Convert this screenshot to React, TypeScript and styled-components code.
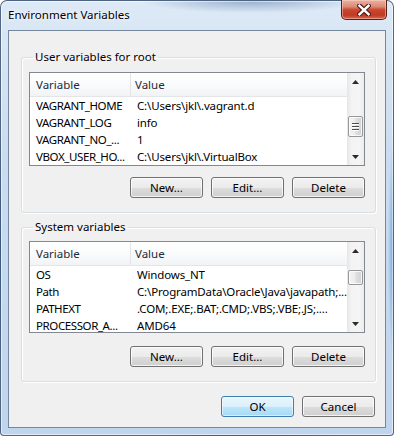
import React from 'react';
import styled, { createGlobalStyle } from 'styled-components';

const Global = createGlobalStyle`
  html, body { margin: 0; padding: 0; background: #ffffff; }
  body {
    font-family: "Noto Sans", "Liberation Sans", sans-serif;
    font-size: 11.5px;
    color: #000;
  }
  * { box-sizing: border-box; }
`;

const Window = styled.div`
  width: 394px;
  height: 436px;
  display: flex;
  flex-direction: column;
  padding: 0 7px 7px 7px;
  border: 1px solid rgba(40, 62, 92, 0.75);
  border-radius: 7px 7px 4px 4px;
  background:
    radial-gradient(ellipse 110px 12px at 250px 0px, rgba(95, 128, 170, 0.55), rgba(95, 128, 170, 0) 100%),
    radial-gradient(ellipse 6px 120px at 393px 250px, rgba(70, 140, 210, 0.8), rgba(70, 140, 210, 0) 100%),
    linear-gradient(to bottom, #dde9f6 0%, #cadcf0 35%, #bfd5ed 100%);
  box-shadow: inset 0 0 0 1px rgba(255, 255, 255, 0.55);
`;

const TitleBar = styled.div`
  height: 29px;
  display: flex;
  align-items: flex-start;
  justify-content: space-between;
  flex-shrink: 0;
`;

const Title = styled.span`
  margin-top: 6px;
  line-height: 16px;
  font-size: 11.5px;
  color: #000;
  text-shadow: 0 0 6px rgba(255, 255, 255, 0.95), 0 0 3px rgba(255, 255, 255, 0.9);
`;

const CloseButton = styled.div`
  width: 46px;
  height: 20px;
  margin: -1px -1px 0 0;
  border: 1px solid #5a2018;
  border-top: none;
  border-radius: 0 0 5px 5px;
  background: linear-gradient(to bottom, #ecb2a3 0%, #dc8b77 35%, #c9452d 52%, #c13b23 80%, #d5694f 100%);
  box-shadow: inset 0 0 0 1px rgba(255, 220, 210, 0.45);
  display: flex;
  align-items: center;
  justify-content: center;
`;

const Client = styled.div`
  flex: 1;
  display: flex;
  flex-direction: column;
  background: #f0f0f0;
  border: 1px solid #74879c;
  padding: 0 9px 0 12px;
`;

const Group = styled.fieldset<{ $top: number }>`
  margin: ${(p) => p.$top}px 0 0 0;
  padding: 0 9px 0 7px;
  border: 1px solid #d5dfe5;
  border-radius: 3px;
  box-shadow: 1px 1px 0 #ffffff, inset 1px 1px 0 #ffffff;
  min-width: 0;
  display: flex;
  flex-direction: column;
`;

const Legend = styled.legend`
  margin-left: 4px;
  padding: 0 2px;
  line-height: 14px;
  font-size: 11.5px;
  color: #000;
`;

const GroupBody = styled.div<{ $padTop: number; $padBottom: number }>`
  display: flex;
  flex-direction: column;
  padding-top: ${(p) => p.$padTop}px;
  padding-bottom: ${(p) => p.$padBottom}px;
`;

const ListBox = styled.div<{ $height: number }>`
  width: 336px;
  height: ${(p) => p.$height}px;
  border: 1px solid #828790;
  background: #ffffff;
  display: flex;
  overflow: hidden;
`;

const Table = styled.div`
  flex: 1;
  display: flex;
  flex-direction: column;
  overflow: hidden;
`;

const HeaderRow = styled.div`
  height: 24px;
  flex-shrink: 0;
  display: flex;
  align-items: stretch;
  border-bottom: 1px solid #e3e5e8;
  background: linear-gradient(to bottom, #ffffff 0%, #fafbfc 50%, #f2f3f5 100%);
`;

const HeaderCell = styled.div<{ $width?: number; $pad: number }>`
  ${(p) => (p.$width ? `width: ${p.$width}px; flex-shrink: 0; border-right: 1px solid #e3e5e8;` : 'flex: 1;')}
  padding-left: ${(p) => p.$pad}px;
  display: flex;
  align-items: center;
  color: #1e2a38;
  white-space: nowrap;
  overflow: hidden;
`;

const DataRow = styled.div`
  height: 17px;
  flex-shrink: 0;
  display: flex;
  align-items: center;
`;

const Cell = styled.div<{ $width?: number }>`
  ${(p) =>
    p.$width
      ? `width: ${p.$width}px; flex-shrink: 0; letter-spacing: -0.4px;`
      : 'flex: 1; letter-spacing: -0.15px;'}
  padding-left: 6px;
  white-space: nowrap;
  overflow: hidden;
  line-height: 17px;
`;

const ScrollBar = styled.div`
  width: 17px;
  flex-shrink: 0;
  display: flex;
  flex-direction: column;
  background: linear-gradient(to right, #e6e6e6 0%, #f3f3f3 25%, #f5f5f5 70%, #ececec 100%);
`;

const ArrowButton = styled.div`
  height: 17px;
  flex-shrink: 0;
  display: flex;
  align-items: center;
  justify-content: center;
`;

const Track = styled.div`
  flex: 1;
  display: flex;
  flex-direction: column;
  align-items: center;
`;

const Thumb = styled.div<{ $offset: number; $height: number }>`
  margin-top: ${(p) => p.$offset}px;
  width: 15px;
  height: ${(p) => p.$height}px;
  border: 1px solid #979797;
  border-radius: 2px;
  background: linear-gradient(to right, #f4f4f4 0%, #ececec 45%, #dedede 55%, #d2d2d2 100%);
  box-shadow: inset 0 0 0 1px rgba(255, 255, 255, 0.8);
  display: flex;
  flex-direction: column;
  align-items: center;
  justify-content: center;
  gap: 1px;
`;

const Grip = styled.div`
  width: 7px;
  height: 1px;
  background: #4d4d4d;
  box-shadow: 0 1px 0 #ffffff;
  margin-bottom: 1px;
`;

const ButtonRow = styled.div<{ $top: number; $padRight: number }>`
  margin-top: ${(p) => p.$top}px;
  padding-right: ${(p) => p.$padRight}px;
  display: flex;
  justify-content: flex-end;
  gap: 8px;
`;

const PushButton = styled.div<{ $default?: boolean }>`
  width: 73px;
  height: 21px;
  border: 1px solid ${(p) => (p.$default ? '#3c7fb1' : '#707070')};
  border-radius: 3px;
  background: ${(p) =>
    p.$default
      ? 'linear-gradient(to bottom, #eaf6fd 0%, #d9f0fc 50%, #bee6fd 50%, #a7d9f5 100%)'
      : 'linear-gradient(to bottom, #f2f2f2 0%, #ebebeb 50%, #dddddd 50%, #cfcfcf 100%)'};
  box-shadow: inset 0 0 0 1px ${(p) => (p.$default ? 'rgba(255,255,255,0.55)' : 'rgba(255,255,255,0.75)')};
  display: flex;
  align-items: center;
  justify-content: center;
  color: #000;
`;

type Row = [string, string];

const userRows: Row[] = [
  ['VAGRANT_HOME', 'C:\\Users\\jkl\\.vagrant.d'],
  ['VAGRANT_LOG', 'info'],
  ['VAGRANT_NO_...', '1'],
  ['VBOX_USER_HO...', 'C:\\Users\\jkl\\.VirtualBox'],
];

const systemRows: Row[] = [
  ['OS', 'Windows_NT'],
  ['Path', 'C:\\ProgramData\\Oracle\\Java\\javapath;...'],
  ['PATHEXT', '.COM;.EXE;.BAT;.CMD;.VBS;.VBE;.JS;....'],
  ['PROCESSOR_A...', 'AMD64'],
];

const UpArrow = () => (
  <svg width="7" height="4" viewBox="0 0 7 4">
    <path d="M3.5 0 L7 4 L0 4 Z" fill="#2b2b2b" />
  </svg>
);

const DownArrow = () => (
  <svg width="7" height="4" viewBox="0 0 7 4">
    <path d="M0 0 L7 0 L3.5 4 Z" fill="#2b2b2b" />
  </svg>
);

const CloseGlyph = () => (
  <svg width="14" height="12" viewBox="0 0 14 12">
    <path d="M2.5 1.8 L11.5 10.2 M11.5 1.8 L2.5 10.2" stroke="#4a1912" strokeWidth="4.6" strokeLinecap="square" />
    <path d="M2.5 1.8 L11.5 10.2 M11.5 1.8 L2.5 10.2" stroke="#ffffff" strokeWidth="2.5" strokeLinecap="square" />
  </svg>
);

function VarList({
  rows,
  height,
  thumbOffset,
  thumbHeight,
  grip,
}: {
  rows: Row[];
  height: number;
  thumbOffset: number;
  thumbHeight: number;
  grip: boolean;
}) {
  return (
    <ListBox $height={height}>
      <Table>
        <HeaderRow>
          <HeaderCell $width={101} $pad={6}>Variable</HeaderCell>
          <HeaderCell $pad={4}>Value</HeaderCell>
        </HeaderRow>
        {rows.map(([name, value]) => (
          <DataRow key={name}>
            <Cell $width={101}>{name}</Cell>
            <Cell>{value}</Cell>
          </DataRow>
        ))}
      </Table>
      <ScrollBar>
        <ArrowButton>
          <UpArrow />
        </ArrowButton>
        <Track>
          <Thumb $offset={thumbOffset} $height={thumbHeight}>
            {grip && (
              <>
                <Grip />
                <Grip />
                <Grip />
              </>
            )}
          </Thumb>
        </Track>
        <ArrowButton>
          <DownArrow />
        </ArrowButton>
      </ScrollBar>
    </ListBox>
  );
}

export default function App() {
  return (
    <>
      <Global />
      <Window>
        <TitleBar>
          <Title>Environment Variables</Title>
          <CloseButton>
            <CloseGlyph />
          </CloseButton>
        </TitleBar>
        <Client>
          <Group $top={19}>
            <Legend>User variables for root</Legend>
            <GroupBody $padTop={8} $padBottom={14}>
              <VarList rows={userRows} height={94} thumbOffset={26} thumbHeight={21} grip />
              <ButtonRow $top={11} $padRight={1}>
                <PushButton>New...</PushButton>
                <PushButton>Edit...</PushButton>
                <PushButton>Delete</PushButton>
              </ButtonRow>
            </GroupBody>
          </Group>
          <Group $top={7}>
            <Legend>System variables</Legend>
            <GroupBody $padTop={7} $padBottom={14}>
              <VarList rows={systemRows} height={92} thumbOffset={11} thumbHeight={15} grip={false} />
              <ButtonRow $top={13} $padRight={1}>
                <PushButton>New...</PushButton>
                <PushButton>Edit...</PushButton>
                <PushButton>Delete</PushButton>
              </ButtonRow>
            </GroupBody>
          </Group>
          <ButtonRow $top={14} $padRight={1}>
            <PushButton $default>OK</PushButton>
            <PushButton>Cancel</PushButton>
          </ButtonRow>
        </Client>
      </Window>
    </>
  );
}
